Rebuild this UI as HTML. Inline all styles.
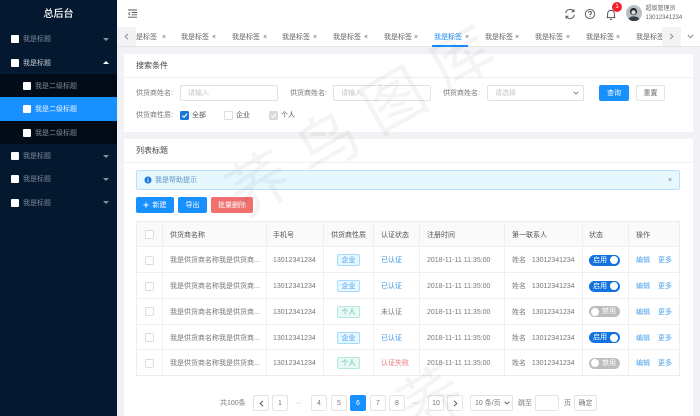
<!DOCTYPE html>
<html lang="zh"><head><meta charset="utf-8"><title>总后台</title>
<style>
*{box-sizing:border-box}
html,body{margin:0;padding:0;width:700px;height:416px;overflow:hidden;background:#f0f2f5}
body{position:relative;font-family:"Liberation Sans","Noto Sans CJK SC",sans-serif;font-size:7px;color:#666;filter:blur(.3px)}
div,span{position:absolute;white-space:nowrap}
#side{left:0;top:0;width:117px;height:416px;background:#04182f}
.m{left:0;width:117px;height:23.4px;line-height:25px;color:#7d8a9a}
.m i{position:absolute;left:11px;top:8px;width:8px;height:8px;background:#fff;border-radius:1px}
.m span{left:23px}
.m b{position:absolute;left:103px;top:10.5px;width:0;height:0;border:3px solid transparent;border-top:3px solid #8794a3;border-bottom:0}
.s i{left:23px}.s span{left:35px}
.s{background:#010c18}
#top{left:117px;top:0;width:583px;height:27px;background:#fff}
#tabs{left:117px;top:27px;width:583px;height:20px;background:#fff;border-bottom:1px solid #e4e7ea;line-height:21px}
.x{color:#666}
.card{background:#fff}
.ct{left:136px;font-size:8px;color:#444;line-height:14px}
.line{height:1px;background:#f0f0f0}
.in{height:16px;background:#fff;border:1px solid #e2e2e2;border-radius:2px;line-height:15px;color:#c4c4c4;padding-left:7px}
.l{line-height:18px;color:#777}
.btn{height:16px;line-height:17px;border-radius:2px;text-align:center;color:#fff;background:#1890ff}
.ck{width:9px;height:9px;border:1px solid #ddd;border-radius:1.5px;background:#fff}
#tb{left:136px;top:221px;width:544px;height:155px;border:1px solid #ececec;border-radius:2px}
.r{left:136px;width:544px;border-bottom:1px solid #efefef;background:#fff;color:#777}
.r span{top:0;line-height:inherit}
.h{background:#fafafa;color:#555}
.v{top:221px;width:1px;height:155px;background:#efefef}
.r .ck{left:9px;top:8.5px}
.tg{left:201px;width:23px;height:12px;top:7px!important;line-height:11px!important;border-radius:2px;text-align:center;border:1px solid}
.b{background:#e6f7ff;border-color:#a6dcfb;color:#3b9bee}
.g{background:#e8f8f5;border-color:#b5e8df;color:#4fc0ab}
.sw{left:453px;top:7.5px;width:31px;height:11px;border-radius:6px;color:#fff}
.sw u{position:absolute;top:1.5px;width:8px;height:8px;border-radius:50%;background:#fff}
.on{background:#1273de}.off{background:#bdbdbd}
.on em{position:absolute;left:4px;top:0;font-style:normal;line-height:12px}
.off em{position:absolute;left:13px;top:0;font-style:normal;line-height:12px}
.on u{left:21px}.off u{left:1.5px}
.e{color:#4aa3ee}
.p{top:395px;height:16px;width:16px;background:#fff;border:1px solid #e4e4e4;border-radius:2px;text-align:center;line-height:15px;color:#777}
.pt{top:396px;line-height:16px;color:#777}
#wm{left:0;top:0;width:700px;height:416px;overflow:hidden;pointer-events:none}
#wm span{width:1px;height:1px;font-size:62px;line-height:0;text-indent:-31px;color:rgba(0,0,0,.042);transform-origin:0 0;transform:rotate(-30deg)}
</style></head><body>

<div id="side">
<div style="left:0;width:117px;top:6px;text-align:center;color:#fff;font-size:10px;line-height:17px;font-weight:500">总后台</div>
<div class="m" style="top:27px"><i></i><span>我是标题</span><b></b></div>
<div class="m" style="top:50.5px;color:#c5ccd4"><i></i><span>我是标题</span><b style="border-top:0;border-bottom:3px solid #fff"></b></div>
<div class="m s" style="top:74px"><i></i><span>我是二级标题</span></div>
<div class="m s" style="top:97.3px;background:#1890ff;color:#e8f3ff"><i></i><span>我是二级标题</span></div>
<div class="m s" style="top:120.7px"><i></i><span>我是二级标题</span></div>
<div class="m" style="top:144px"><i></i><span>我是标题</span><b></b></div>
<div class="m" style="top:167.4px"><i></i><span>我是标题</span><b></b></div>
<div class="m" style="top:190.8px"><i></i><span>我是标题</span><b></b></div>
</div>

<div id="top">
<svg style="position:absolute;left:11px;top:9px" width="9" height="9" viewBox="0 0 9 9" fill="none" stroke="#555" stroke-width=".9"><path d="M0 1H9M3.6 3.5H9M3.6 5.8H9M0 8.2H9"/><path d="M2 3.1L.6 4.6L2 6.1" stroke-width=".8"/></svg>
<svg style="position:absolute;left:447px;top:8px" width="12" height="12" viewBox="0 0 12 12" fill="none" stroke="#555" stroke-width="1"><path d="M1.6 5.2A4.4 4.4 0 0 1 9.6 3.4M10.4 6.8A4.4 4.4 0 0 1 2.4 8.6"/><path d="M9.9 1.2V3.7H7.5M2.1 10.8V8.3H4.5"/></svg>
<svg style="position:absolute;left:467px;top:8px" width="12" height="12" viewBox="0 0 12 12" fill="none" stroke="#555" stroke-width=".9"><circle cx="6" cy="6" r="4.6"/><path d="M4.6 4.8A1.4 1.4 0 1 1 6 6.3V7.2M6 8.2V9"/></svg>
<svg style="position:absolute;left:488px;top:8px" width="12" height="13" viewBox="0 0 12 13" fill="none" stroke="#555" stroke-width="1"><path d="M2.6 9.6V5.6A3.4 3.4 0 0 1 9.4 5.6V9.6ZM1.6 9.6H10.4M4.8 11.4H7.2"/></svg>
<div style="left:495px;top:2px;width:10px;height:10px;border-radius:50%;background:#f5222d;color:#fff;font-size:6px;line-height:10.5px;text-align:center">1</div>
<svg style="position:absolute;left:509px;top:5px" width="16" height="16" viewBox="0 0 16 16"><circle cx="8" cy="8" r="8" fill="#b6c0c6"/><circle cx="7.5" cy="6.5" r="3.6" fill="#2a2a2a"/><circle cx="7.5" cy="7.4" r="2.1" fill="#e9dcd2"/><path d="M2.5 14C4 10.5 11 10.5 13.5 14A8 8 0 0 1 2.5 14Z" fill="#3a3f44"/></svg>
<div style="left:528.5px;top:4.5px;font-size:6px;line-height:9px;color:#666">超级管理员</div>
<div style="left:528.5px;top:14px;font-size:6px;line-height:9px;color:#666">13012341234</div>
</div>

<div id="tabs">
<span style="left:12px">我是标签</span><span style="left:45px" class="x">×</span>
<span style="left:64px">我是标签</span><span style="left:95px" class="x">×</span>
<span style="left:115px">我是标签</span><span style="left:146px" class="x">×</span>
<span style="left:165px">我是标签</span><span style="left:196px" class="x">×</span>
<span style="left:216px">我是标签</span><span style="left:247px" class="x">×</span>
<span style="left:267px">我是标签</span><span style="left:297px" class="x">×</span>
<span style="left:317px;color:#1890ff">我是标签</span><span style="left:348px" class="x">×</span>
<div style="left:315px;top:18px;width:36px;height:2px;background:#1890ff"></div>
<span style="left:368px">我是标签</span><span style="left:398px" class="x">×</span>
<span style="left:418px">我是标签</span><span style="left:449px" class="x">×</span>
<span style="left:469px">我是标签</span><span style="left:499px" class="x">×</span>
<span style="left:519px">我是标签</span>
<div style="left:0;top:0;width:19px;height:19px;background:#f2f3f5"><svg style="position:absolute;left:7px;top:6px" width="5" height="7" viewBox="0 0 5 7" fill="none" stroke="#888"><path d="M4 .8L1.2 3.5L4 6.2"/></svg></div>
<div style="left:545px;top:0;width:19px;height:19px;background:#f2f3f5"><svg style="position:absolute;left:7px;top:6px" width="5" height="7" viewBox="0 0 5 7" fill="none" stroke="#888"><path d="M1 .8L3.8 3.5L1 6.2"/></svg></div>
<div style="left:564px;top:0;width:19px;height:19px;background:#fff"><svg style="position:absolute;left:6px;top:7px" width="7" height="5" viewBox="0 0 7 5" fill="none" stroke="#888"><path d="M.8 1L3.5 3.8L6.2 1"/></svg></div>
</div>

<div class="card" style="left:124px;top:54px;width:569px;height:78px"></div>
<div class="ct" style="top:59px">搜索条件</div>
<div class="line" style="left:124px;top:77px;width:569px"></div>
<div class="l" style="left:136px;top:85px">供货商姓名:</div>
<div class="in" style="left:180px;top:85px;width:98px">请输入</div>
<div class="l" style="left:290px;top:85px">供货商姓名:</div>
<div class="in" style="left:333px;top:85px;width:98px">请输入</div>
<div class="l" style="left:443px;top:85px">供货商姓名:</div>
<div class="in" style="left:487px;top:85px;width:97px">请选择<svg style="position:absolute;left:85px;top:5px" width="6" height="4" viewBox="0 0 6 4" fill="none" stroke="#888"><path d="M.6 .8L3 3L5.4 .8"/></svg></div>
<div class="btn" style="left:599px;top:85px;width:30px">查询</div>
<div class="btn" style="left:636px;top:85px;width:29px;background:#fff;border:1px solid #e4e4e4;color:#666;line-height:15px">重置</div>
<div class="l" style="left:136px;top:107px">供货商性质:</div>
<div class="ck" style="left:180px;top:111px;background:#1677d8;border-color:#1677d8"><svg style="position:absolute;left:0;top:0" width="7" height="7" viewBox="0 0 7 7" fill="none" stroke="#fff" stroke-width="1.1"><path d="M1.2 3.6L3 5.3L6 1.6"/></svg></div>
<div class="l" style="left:192px;top:107px;color:#555">全部</div>
<div class="ck" style="left:224px;top:111px"></div>
<div class="l" style="left:236px;top:107px;color:#555">企业</div>
<div class="ck" style="left:269px;top:111px;background:#d9d9d9;border-color:#d9d9d9"><svg style="position:absolute;left:0;top:0" width="7" height="7" viewBox="0 0 7 7" fill="none" stroke="#fff" stroke-width="1.1"><path d="M1.2 3.6L3 5.3L6 1.6"/></svg></div>
<div class="l" style="left:281px;top:107px;color:#555">个人</div>

<div class="card" style="left:124px;top:139px;width:569px;height:277px"></div>
<div class="ct" style="top:144px">列表标题</div>
<div class="line" style="left:124px;top:162px;width:569px"></div>
<div style="left:136px;top:170px;width:544px;height:20px;background:#e6f7ff;border:1px solid #b5e3fb;border-radius:2px"></div>
<svg style="position:absolute;left:144px;top:176px" width="8" height="8" viewBox="0 0 8 8"><circle cx="4" cy="4" r="3.5" fill="#1677d8"/><path d="M4 1.8V2.8M4 3.5V6.1" stroke="#fff"/></svg>
<div style="left:155px;top:174px;line-height:14px;color:#5d93c4">我是帮助提示</div>
<div style="left:668px;top:174px;line-height:14px;color:#777">×</div>
<div class="btn" style="left:136px;top:197px;width:38px;padding-left:9px">新建<svg style="position:absolute;left:7px;top:5px" width="6" height="6" viewBox="0 0 6 6" stroke="#fff"><path d="M3 .5V5.5M.5 3H5.5"/></svg></div>
<div class="btn" style="left:178px;top:197px;width:29px">导出</div>
<div class="btn" style="left:211px;top:197px;width:42px;background:#f0706f">批量删除</div>

<div class="r h" style="top:221px;height:26px;line-height:28px;border-top:1px solid #efefef"><div class="ck" style="left:9px;top:8px"></div><span style="left:34px">供货商名称</span><span style="left:137px">手机号</span><span style="left:195px">供货商性质</span><span style="left:245px">认证状态</span><span style="left:291px">注册时间</span><span style="left:376px">第一联系人</span><span style="left:453px">状态</span><span style="left:500px">操作</span></div>

<div class="r" style="top:247px;height:26px;line-height:28px"><div class="ck"></div><span style="left:34px">我是供货商名称我是供货商...</span><span style="left:137px">13012341234</span><span class="tg b">企业</span><span style="left:245px;color:#3b94e6">已认证</span><span style="left:291px">2018-11-11 11:35:00</span><span style="left:376px">姓名&nbsp;&nbsp;&nbsp;13012341234</span><div class="sw on"><em>启用</em><u></u></div><span class="e" style="left:500px">编辑</span><span class="e" style="left:522px">更多</span></div>

<div class="r" style="top:273px;height:25.5px;line-height:27px"><div class="ck"></div><span style="left:34px">我是供货商名称我是供货商...</span><span style="left:137px">13012341234</span><span class="tg b">企业</span><span style="left:245px;color:#3b94e6">已认证</span><span style="left:291px">2018-11-11 11:35:00</span><span style="left:376px">姓名&nbsp;&nbsp;&nbsp;13012341234</span><div class="sw on"><em>启用</em><u></u></div><span class="e" style="left:500px">编辑</span><span class="e" style="left:522px">更多</span></div>

<div class="r" style="top:298.5px;height:26px;line-height:28px"><div class="ck"></div><span style="left:34px">我是供货商名称我是供货商...</span><span style="left:137px">13012341234</span><span class="tg g">个人</span><span style="left:245px">未认证</span><span style="left:291px">2018-11-11 11:35:00</span><span style="left:376px">姓名&nbsp;&nbsp;&nbsp;13012341234</span><div class="sw off"><em>禁用</em><u></u></div><span class="e" style="left:500px">编辑</span><span class="e" style="left:522px">更多</span></div>

<div class="r" style="top:324.5px;height:25.5px;line-height:27px"><div class="ck"></div><span style="left:34px">我是供货商名称我是供货商...</span><span style="left:137px">13012341234</span><span class="tg b">企业</span><span style="left:245px;color:#3b94e6">已认证</span><span style="left:291px">2018-11-11 11:35:00</span><span style="left:376px">姓名&nbsp;&nbsp;&nbsp;13012341234</span><div class="sw on"><em>启用</em><u></u></div><span class="e" style="left:500px">编辑</span><span class="e" style="left:522px">更多</span></div>

<div class="r" style="top:350px;height:26px;line-height:28px"><div class="ck"></div><span style="left:34px">我是供货商名称我是供货商...</span><span style="left:137px">13012341234</span><span class="tg g">个人</span><span style="left:245px;color:#e8787a">认证失败</span><span style="left:291px">2018-11-11 11:35:00</span><span style="left:376px">姓名&nbsp;&nbsp;&nbsp;13012341234</span><div class="sw off"><em>禁用</em><u></u></div><span class="e" style="left:500px">编辑</span><span class="e" style="left:522px">更多</span></div>

<div id="tb"></div>
<div class="v" style="left:162px"></div><div class="v" style="left:266px"></div><div class="v" style="left:323px"></div><div class="v" style="left:373px"></div><div class="v" style="left:419px"></div><div class="v" style="left:504px"></div><div class="v" style="left:582px"></div><div class="v" style="left:628px"></div>

<div class="pt" style="left:220px">共100条</div>
<div class="p" style="left:253px"><svg style="position:absolute;left:5px;top:4px" width="5" height="7" viewBox="0 0 5 7" fill="none" stroke="#555"><path d="M4 .8L1.2 3.5L4 6.2"/></svg></div>
<div class="p" style="left:272px">1</div>
<div class="pt" style="left:295px;color:#999">···</div>
<div class="p" style="left:311px">4</div>
<div class="p" style="left:331px">5</div>
<div class="p" style="left:350px;background:#1890ff;border-color:#1890ff;color:#fff">6</div>
<div class="p" style="left:370px">7</div>
<div class="p" style="left:389px">8</div>
<div class="pt" style="left:412px;color:#999">···</div>
<div class="p" style="left:428px">10</div>
<div class="p" style="left:447px"><svg style="position:absolute;left:5px;top:4px" width="5" height="7" viewBox="0 0 5 7" fill="none" stroke="#555"><path d="M1 .8L3.8 3.5L1 6.2"/></svg></div>
<div class="p" style="left:470px;width:43px;text-align:left;padding-left:4px">10 条/页<svg style="position:absolute;left:33px;top:5px" width="6" height="4" viewBox="0 0 6 4" fill="none" stroke="#666"><path d="M.6 .8L3 3L5.4 .8"/></svg></div>
<div class="pt" style="left:518px">跳至</div>
<div class="p" style="left:535px;width:24px"></div>
<div class="pt" style="left:564px">页</div>
<div class="p" style="left:574px;width:23px">确定</div>

<div id="wm">
<span style="left:260px;top:186px">荞</span>
<span style="left:328px;top:145px">鸟</span>
<span style="left:395px;top:102px">图</span>
<span style="left:462px;top:60px">库</span>
<span style="left:432px;top:400px">荞</span>
</div>
</body></html>
